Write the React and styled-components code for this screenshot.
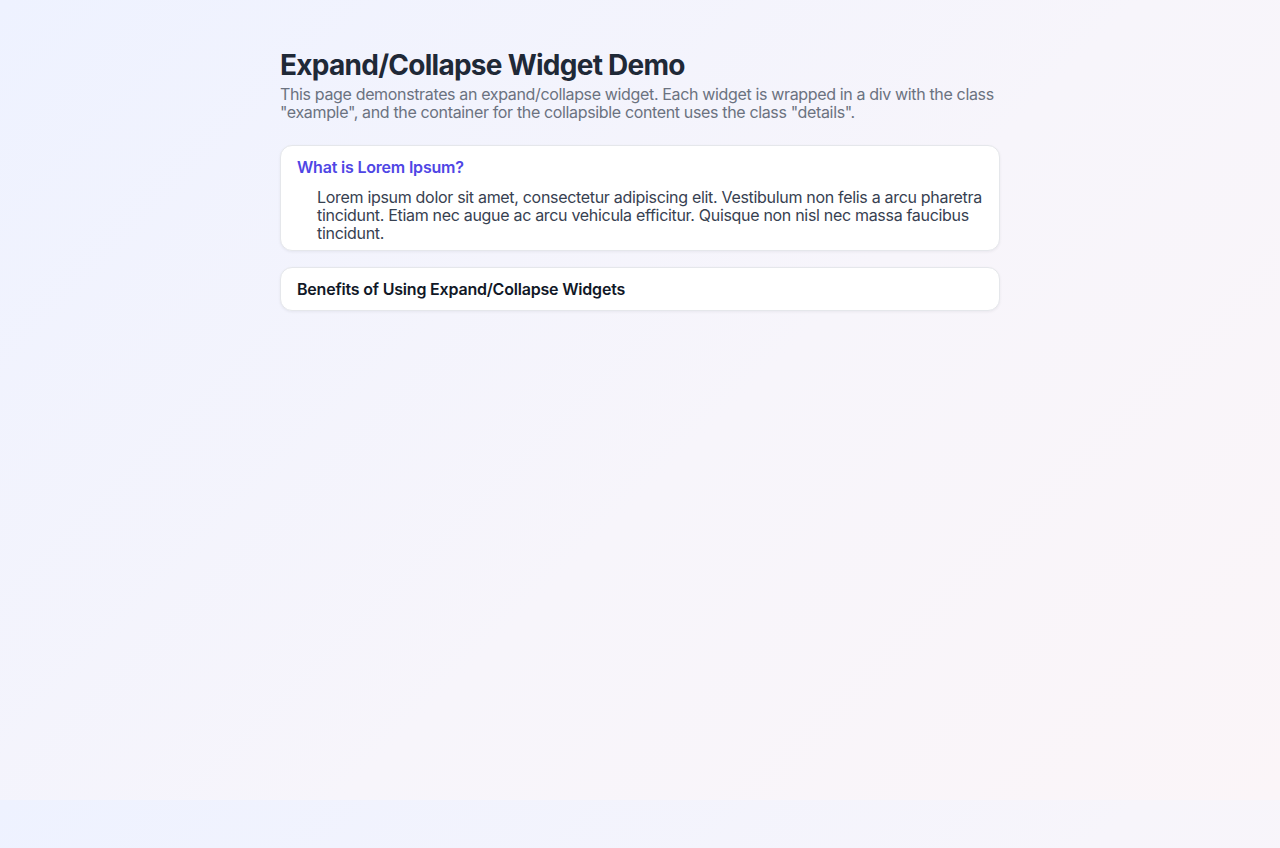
import React from 'react'
import styled, { createGlobalStyle } from 'styled-components'

const GlobalStyle = createGlobalStyle`
  html {
    background: linear-gradient(135deg, #eef2ff 0%, #f7f5fb 55%, #fbf5f8 100%);
    background-size: 100% 800px;
    background-repeat: repeat-y;
    min-height: 100%;
  }
  body {
    margin: 0;
    font-family: Inter, "Noto Sans", sans-serif;
    -webkit-font-smoothing: antialiased;
  }
`

const Page = styled.main`
  max-width: 720px;
  margin: 0 auto;
  padding: 45px 0 48px;
`

const Title = styled.h1`
  margin: 0;
  font-size: 28px;
  line-height: 40px;
  font-weight: 700;
  color: #1f2937;
  letter-spacing: -0.73px;
`

const Intro = styled.p`
  margin: 0 0 24px;
  font-size: 16px;
  line-height: 18px;
  color: #6b7280;
  letter-spacing: -0.35px;
`

const Example = styled.details`
  background: #ffffff;
  border: 1px solid #e5e7eb;
  border-radius: 12px;
  box-shadow: 0 1px 3px rgba(15, 23, 42, 0.06);
  margin-bottom: 16px;
`

const Summary = styled.summary`
  list-style: none;
  cursor: pointer;
  padding: 11px 16px;
  font-size: 16px;
  line-height: 20px;
  font-weight: 600;
  letter-spacing: -0.2px;
  color: ${p => (p.$active ? '#4f46e5' : '#111827')};

  &::-webkit-details-marker {
    display: none;
  }
`

const Details = styled.div`
  padding: 0 16px 8px 36px;
  font-size: 16px;
  line-height: 18px;
  color: #374151;
  letter-spacing: -0.31px;
`

export default function App() {
  return (
    <>
      <GlobalStyle />
      <Page>
        <Title>Expand/Collapse Widget Demo</Title>
        <Intro>
          This page demonstrates an expand/collapse widget. Each widget is wrapped in a div with the class
          "example", and the container for the collapsible content uses the class "details".
        </Intro>
        <Example open>
          <Summary $active>What is Lorem Ipsum?</Summary>
          <Details>
            Lorem ipsum dolor sit amet, consectetur adipiscing elit. Vestibulum non felis a arcu pharetra
            tincidunt. Etiam nec augue ac arcu vehicula efficitur. Quisque non nisl nec massa faucibus tincidunt.
          </Details>
        </Example>
        <Example>
          <Summary>Benefits of Using Expand/Collapse Widgets</Summary>
          <Details>
            Expand/collapse widgets keep long pages tidy by hiding secondary content until it is needed.
          </Details>
        </Example>
      </Page>
    </>
  )
}
